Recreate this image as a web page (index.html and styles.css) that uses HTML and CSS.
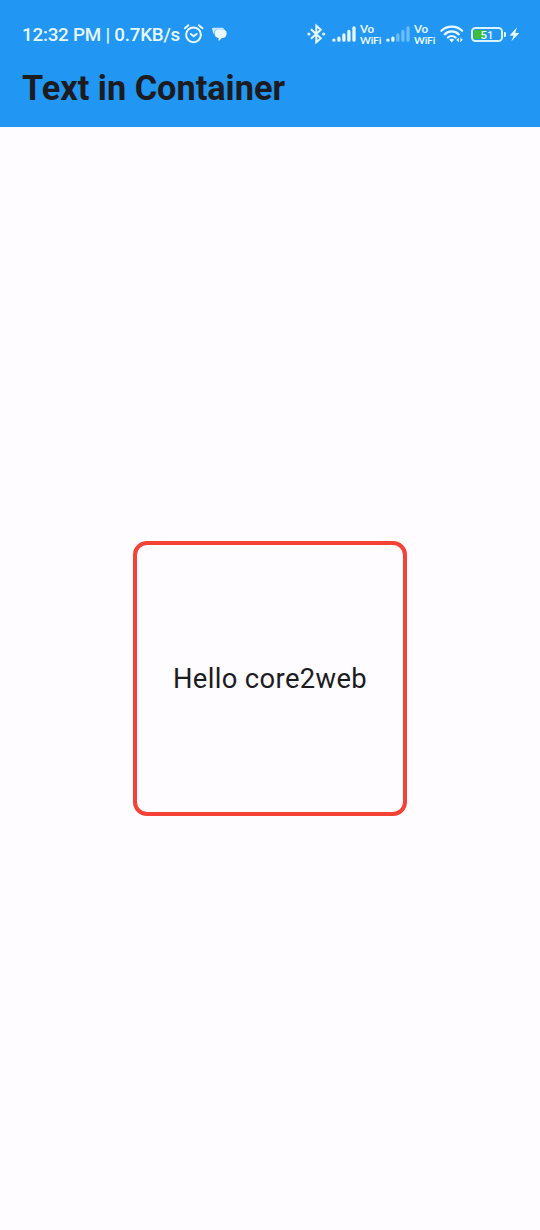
FILE: index.html
```html
<!DOCTYPE html>
<html lang="en">
<head>
<meta charset="utf-8">
<title>Text in Container</title>
<link rel="stylesheet" href="styles.css">
</head>
<body>
<div class="screen">
  <header class="app-bar">
    <div class="status">
      <span class="clock">12:32 PM | 0.7KB/s</span>
      <svg class="alarm" width="20" height="20" viewBox="0 0 20 20" fill="none" stroke="currentColor" stroke-width="2" stroke-linecap="round" stroke-linejoin="round">
        <circle cx="9.500" cy="10.800" r="7.400"/><path d="M.9 4.300 4.400 1.300M18.400 4.300 14.900 1.300M6.900 10l2.700 2.300 3-2.300"/>
      </svg>
      <svg class="chat" width="15" height="15" viewBox="0 0 15 15" fill="currentColor">
        <path d="M1.200.8h8.200c1.300 0 2.300.5 2.900 1.400H6.200C3.700 2.200 2.200 4 2.200 6.400v1.400C.9 6.300.8 4.500.5 3.300L0 2.200C-.1 1.300.4.8 1.200.8z" opacity=".85"/>
        <path d="M6.400 2.300h4c2.500 0 4.300 1.900 4.300 4.300s-1.800 4.500-4.300 4.500H10l-3.400 3.200v-3.300c-2.500-.2-4-2-4-4.300s1.500-4.400 3.800-4.400z"/>
      </svg>
      <div class="indicators">
        <svg class="bluetooth" width="20" height="22" viewBox="0 0 20 22" fill="none" stroke="currentColor" stroke-width="2" stroke-linejoin="miter">
          <path d="M4 6.200 13.800 15.300 9.300 19.300V2.700l4.500 4L4 15.800"/>
          <circle cx="1.900" cy="11" r="1.600" fill="currentColor" stroke="none"/><circle cx="16.700" cy="11" r="1.600" fill="currentColor" stroke="none"/>
        </svg>
        <svg class="signal" width="24" height="16" viewBox="0 0 24 16" stroke="currentColor" stroke-width="3.300" stroke-linecap="round">
          <path d="M1.900 14.100v.1M6.900 12.200v2M11.900 9v5.200M16.900 5.400v8.800M22 2v12.200"/>
        </svg>
        <span class="vowifi"><span class="vo">Vo</span><span class="wf">WiFi</span></span>
        <svg class="signal" width="24" height="16" viewBox="0 0 24 16" stroke="currentColor" stroke-width="3.300" stroke-linecap="round">
          <path d="M1.900 14.100v.1M6.900 12.200v2"/><path opacity=".38" d="M11.900 9v5.200M16.900 5.400v8.800M22 2v12.200"/>
        </svg>
        <span class="vowifi"><span class="vo">Vo</span><span class="wf">WiFi</span></span>
        <svg class="wifi" width="24" height="18" viewBox="0 0 24 18" fill="none" stroke="currentColor" stroke-width="2.300" stroke-linecap="round">
          <path d="M1.500 5.700a15 15 0 0 1 20.500 0M4.700 9.300a10.200 10.200 0 0 1 14.100 0M7.900 12.500a5.800 5.800 0 0 1 7.600 0"/>
          <path d="M9.100 14.600q2.600-1.700 5.200 0L11.700 17.500z" fill="currentColor" stroke="none"/>
          <path d="M18.800 12.500v4.700l-2.500-2.200zM20.300 17.200v-4.700l2.500 2.200z" fill="currentColor" stroke="none"/>
        </svg>
        <div class="battery"><span class="level">51</span></div>
        <svg class="bolt" width="11" height="15" viewBox="0 0 11 15" fill="currentColor"><path d="M8 .3.600 8.400l4 .4L2.400 14.300 10.200 6.200l-4-.4z"/></svg>
      </div>
    </div>
    <h1 class="title">Text in Container</h1>
  </header>
  <main class="body">
    <div class="box">Hello core2web</div>
  </main>
</div>
</body>
</html>
```
FILE: styles.css
```css
* { box-sizing: border-box; }
body { margin: 0; font-family: Roboto, sans-serif; }
.screen { display: flex; flex-direction: column; height: 1230px; background: #fffcff; }
.app-bar { height: 127px; flex: none; background: #2196f3; padding: 20px 20px 0 22px; }
.status { display: flex; align-items: center; height: 28px; color: #e8f8ff; }
.clock { width: 162px; padding-top: 1px; font-size: 18.800px; font-weight: 500; letter-spacing: -.22px; line-height: 28px; white-space: nowrap; }
.chat { margin-left: 8px; }
.indicators { display: flex; align-items: center; margin-left: auto; }
.signal { margin-left: 5px; }
.vowifi { display: flex; flex-direction: column; gap: 1px; width: 22px; margin-left: 4px; font: 700 10.300px/10px Lato, sans-serif; }
.vo { font-size: 11.500px; letter-spacing: .4px; }
.wf { letter-spacing: -.1px; }
.vowifi + .signal { margin-left: 4px; }
.wifi { margin-left: 4px; }
.battery { position: relative; width: 32px; height: 15px; margin-left: 7px; border: 2px solid #d9f3ff; border-radius: 4.500px; background: linear-gradient(90deg, #3fbd38 0 11px, transparent 11px) content-box; padding: 1px; }
.battery::after { content: ""; position: absolute; left: 31px; top: 3px; width: 2px; height: 5px; border-radius: 0 1px 1px 0; background: #d9f3ff; }
.level { display: block; text-align: center; font-size: 11.500px; font-weight: 500; line-height: 10px; }
.bolt { margin-left: 6px; }
.title { margin: 20px 0 0; font-size: 34.300px; line-height: 40px; font-weight: 700; color: #1c1b1f; white-space: nowrap; }
.body { flex: 1; display: flex; align-items: center; justify-content: center; }
.box { display: flex; align-items: center; justify-content: center; width: 274px; height: 275px; border: 4px solid #f44336; border-radius: 14px; font-size: 27.400px; letter-spacing: .36px; color: #1c1b1f; white-space: nowrap; }
```
